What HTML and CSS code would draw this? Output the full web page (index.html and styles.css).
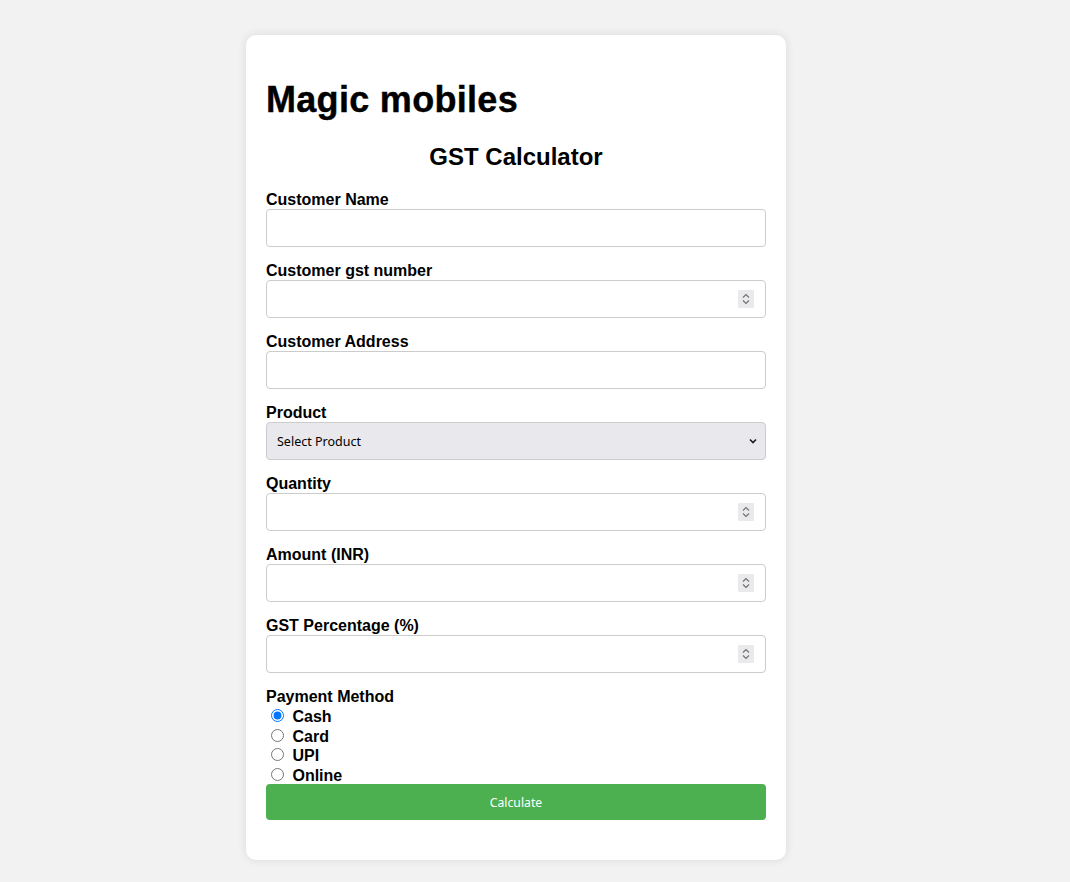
FILE: index.html
```html
<!DOCTYPE html>
<html lang="en">
<head>
<meta charset="UTF-8">
<title>GST Calculator</title>
<link rel="stylesheet" href="styles.css">
</head>
<body>
<div class="page">
  <div class="card">
    <h1 class="brand">Magic mobiles</h1>
    <h2 class="title">GST Calculator</h2>
    <form class="form">
      <label class="field-label" for="name">Customer Name</label>
      <input class="field" type="text" id="name">

      <label class="field-label" for="gst">Customer gst number</label>
      <div class="field num-box">
        <input class="num-input" type="text" inputmode="numeric" id="gst">
        <span class="spin"><svg width="16" height="18" viewBox="0 0 16 18"><path d="M5 7.5 8 4.5 11 7.5M5 10.5 8 13.5 11 10.5" fill="none" stroke="#6f6f6f" stroke-width="1.1"/></svg></span>
      </div>

      <label class="field-label" for="address">Customer Address</label>
      <input class="field" type="text" id="address">

      <label class="field-label" for="product">Product</label>
      <div class="field select-box">
        <select class="select" id="product">
          <option>Select Product</option>
        </select>
        <svg class="select-arrow" width="8" height="6" viewBox="0 0 8 6"><path d="M1 1.5 4 4.5 7 1.5" fill="none" stroke="#1a1a1a" stroke-width="1.6"/></svg>
      </div>

      <label class="field-label" for="qty">Quantity</label>
      <div class="field num-box">
        <input class="num-input" type="text" inputmode="numeric" id="qty">
        <span class="spin"><svg width="16" height="18" viewBox="0 0 16 18"><path d="M5 7.5 8 4.5 11 7.5M5 10.5 8 13.5 11 10.5" fill="none" stroke="#6f6f6f" stroke-width="1.1"/></svg></span>
      </div>

      <label class="field-label" for="amount">Amount (INR)</label>
      <div class="field num-box">
        <input class="num-input" type="text" inputmode="numeric" id="amount">
        <span class="spin"><svg width="16" height="18" viewBox="0 0 16 18"><path d="M5 7.5 8 4.5 11 7.5M5 10.5 8 13.5 11 10.5" fill="none" stroke="#6f6f6f" stroke-width="1.1"/></svg></span>
      </div>

      <label class="field-label" for="pct">GST Percentage (%)</label>
      <div class="field num-box">
        <input class="num-input" type="text" inputmode="numeric" id="pct">
        <span class="spin"><svg width="16" height="18" viewBox="0 0 16 18"><path d="M5 7.5 8 4.5 11 7.5M5 10.5 8 13.5 11 10.5" fill="none" stroke="#6f6f6f" stroke-width="1.1"/></svg></span>
      </div>

      <label class="field-label">Payment Method</label>
      <div class="radios">
        <div class="radio-row"><input type="radio" name="pay" id="cash" checked> <label for="cash">Cash</label></div>
        <div class="radio-row"><input type="radio" name="pay" id="card"> <label for="card">Card</label></div>
        <div class="radio-row"><input type="radio" name="pay" id="upi"> <label for="upi">UPI</label></div>
        <div class="radio-row"><input type="radio" name="pay" id="online"> <label for="online">Online</label></div>
      </div>

      <button type="button" class="btn">Calculate</button>
    </form>
  </div>
</div>
</body>
</html>
```

FILE: styles.css
```css
html, body {
  margin: 0;
  padding: 0;
  background: #f2f2f2;
  font-family: "Liberation Sans", Arial, sans-serif;
}

.page {
  padding: 35px 0 22px 246px;
}

.card {
  width: 500px;
  padding: 20px;
  background: #ffffff;
  border-radius: 10px;
  box-shadow: 0 0 10px rgba(0, 0, 0, 0.1);
}

.brand {
  font-size: 36px;
  font-weight: bold;
  letter-spacing: 0.3px;
  margin: 24px 0 22px;
  -webkit-text-stroke: 0.4px #000;
}

.title {
  font-size: 24px;
  font-weight: bold;
  text-align: center;
  margin: 0 0 20px;
}

.form {
  display: block;
  margin: 0;
}

.field-label {
  display: block;
  font-size: 16px;
  font-weight: bold;
  color: #000;
}

.field {
  display: block;
  box-sizing: border-box;
  width: 100%;
  height: 38px;
  margin: 0 0 15px;
  padding: 8px 10px;
  border: 1px solid #cccccc;
  border-radius: 4px;
  background: #ffffff;
  font-family: "Noto Sans", sans-serif;
  font-size: 12.5px;
}

.num-box {
  display: flex;
  align-items: center;
  padding: 0 11px 0 10px;
}

.num-input {
  flex: 1;
  min-width: 0;
  border: none;
  outline: none;
  padding: 0;
  background: transparent;
  font-family: "Noto Sans", sans-serif;
  font-size: 13px;
}

.spin {
  display: block;
  width: 16px;
  height: 18px;
  background: #eaeaed;
  border-radius: 1px;
}

.spin svg {
  display: block;
}

.select-box {
  display: flex;
  align-items: center;
  padding: 0 8px 0 10px;
  background-color: #e9e9ed;
}

.select {
  flex: 1;
  min-width: 0;
  -webkit-appearance: none;
  appearance: none;
  border: none;
  outline: none;
  padding: 0;
  margin: 0;
  background: transparent;
  color: #000;
  font-family: "Noto Sans", sans-serif;
  font-size: 12.5px;
}

.select-arrow {
  display: block;
  flex: none;
}

.radios {
  margin: 0;
}

.radio-row {
  height: 19.5px;
  font-size: 16px;
  font-weight: bold;
}

.radio-row input {
  margin: 3px 4px 0 5px;
}

.btn {
  display: block;
  width: 100%;
  height: 36px;
  margin: 0 0 20px;
  border: none;
  border-radius: 4px;
  background: #4caf50;
  color: #ffffff;
  font-family: "Noto Sans", sans-serif;
  font-size: 12.2px;
}
```
